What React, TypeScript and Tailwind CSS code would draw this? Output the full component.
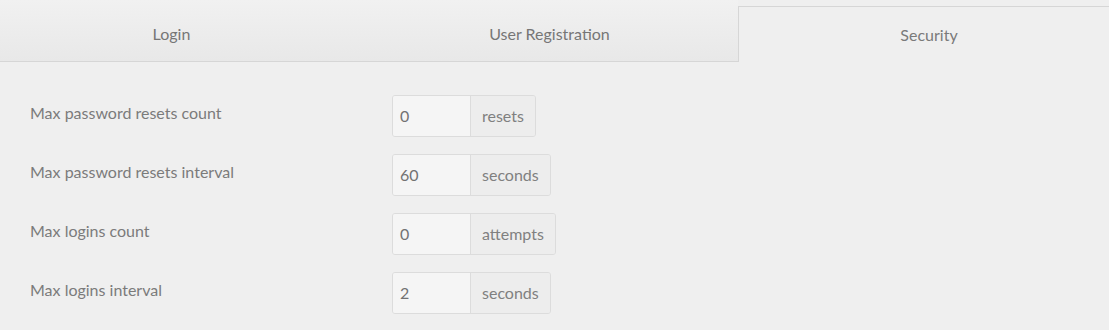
const tabs = [
  { label: 'Login', pad: 'pr-[26px] pt-[6px]' },
  { label: 'User Registration', pad: 'pr-[8px] pt-[6px]' },
  { label: 'Security', pad: 'pl-[10px] pt-[1px]' },
];

const rows = [
  { label: 'Max password resets count', value: '0', unit: 'resets' },
  { label: 'Max password resets interval', value: '60', unit: 'seconds' },
  { label: 'Max logins count', value: '0', unit: 'attempts' },
  { label: 'Max logins interval', value: '2', unit: 'seconds' },
];

function Tab({ label, pad, active }: { label: string; pad: string; active: boolean }) {
  if (active) {
    return (
      <div className={`flex-1 min-w-0 mt-[6px] flex items-center justify-center border-t border-l border-[#d6d6d6] bg-[#efefef] text-[16px] text-[#7a7a7a] ${pad}`}>
        {label}
      </div>
    );
  }
  return (
    <div className={`w-[369px] shrink-0 flex items-center justify-center border-b border-[#d6d6d6] bg-gradient-to-b from-[#f1f1f1] to-[#e8e8e8] text-[16px] text-[#767676] ${pad}`}>
      {label}
    </div>
  );
}

function Row({ label, value, unit }: { label: string; value: string; unit: string }) {
  return (
    <div className="flex items-center h-[42px]">
      <div className="w-[362px] text-[16px] text-[#7b7b7b] -mt-[6px]">{label}</div>
      <div className="flex h-[42px] rounded-[3px] border border-[#dcdcdc] overflow-hidden">
        <div className="w-[78px] flex items-center pl-[7px] bg-[#f5f5f5] border-r border-[#dcdcdc] text-[16px] text-[#727272]">
          {value}
        </div>
        <div className="flex items-center px-[11px] bg-[#ededed] text-[16px] text-[#808080]">{unit}</div>
      </div>
    </div>
  );
}

export default function App() {
  return (
    <div className="w-[1109px] h-[330px] bg-[#efefef] font-['Lato','Open_Sans',sans-serif] overflow-hidden">
      <div className="flex h-[62px]">
        {tabs.map((t) => (
          <Tab key={t.label} label={t.label} pad={t.pad} active={t.label === 'Security'} />
        ))}
      </div>
      <div className="pl-[30px] pt-[33px] flex flex-col gap-[17px]">
        {rows.map((r) => (
          <Row key={r.label} {...r} />
        ))}
      </div>
    </div>
  );
}
